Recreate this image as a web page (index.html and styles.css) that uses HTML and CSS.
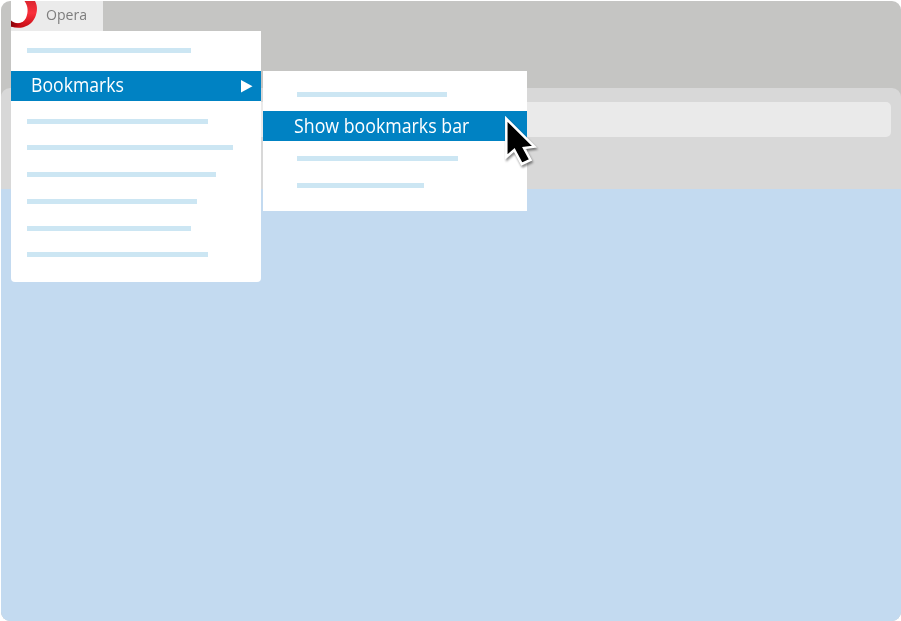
FILE: index.html
```
<!DOCTYPE html>
<html lang="en">
<head>
<meta charset="utf-8">
<title>Opera bookmarks menu</title>
<link rel="stylesheet" href="styles.css">
</head>
<body>
<div class="window">
  <header class="tabs"></header>
  <div class="toolbar"><div class="address"></div></div>
  <main class="page"></main>
</div>
<div class="menu-area">
  <div class="opera-button">
    <svg class="logo" width="28" height="31" viewBox="0 0 28 31">
      <defs>
        <linearGradient id="red" x1="0" y1="0" x2="0" y2="1">
          <stop offset="0" stop-color="#dc2630"/>
          <stop offset=".45" stop-color="#fa303b"/>
          <stop offset="1" stop-color="#c50b14"/>
        </linearGradient>
        <linearGradient id="shade" x1="0" y1="0" x2="1" y2="0">
          <stop offset="0" stop-color="#8a0108"/>
          <stop offset="1" stop-color="#d8101b"/>
        </linearGradient>
      </defs>
      <path d="M0 1H14C18 6 18 12 16 18C13 25 5 26 0 22Z" fill="#fff"/>
      <path d="M13.500 1H24C26.800 6 26.500 12 24 17.500C20 26.500 9 30 0 26.500V21.500C7 24.500 12 23.500 15 18C17.500 12 17.200 6 13.500 1Z" fill="url(#red)"/>
      <path d="M0 20.500C4 24 9 24.300 13 21.500C10 26 5 28 0 26.500Z" fill="url(#shade)"/>
    </svg>
    <span class="opera-label">Opera</span>
  </div>
  <div class="menus">
    <div class="menu main-menu">
      <div class="line w164"></div>
      <div class="item bookmarks"><span class="bookmarks-label">Bookmarks</span>
        <svg class="arrow" width="12" height="13" viewBox="0 0 12 13"><path d="M0 0L11.500 6.300L0 12.600Z" fill="#fff"/></svg>
      </div>
      <div class="lines">
        <div class="line w181"></div>
        <div class="line w206"></div>
        <div class="line w189"></div>
        <div class="line w170"></div>
        <div class="line w164"></div>
        <div class="line w181"></div>
      </div>
    </div>
    <div class="menu submenu">
      <div class="line w150"></div>
      <div class="item show"><span class="show-label">Show bookmarks bar</span></div>
      <div class="lines">
        <div class="line w161"></div>
        <div class="line w127"></div>
      </div>
    </div>
  </div>
</div>
<svg class="cursor" width="44" height="58" viewBox="0 0 44 58">
  <path class="pointer" d="M6.300 7.800V46L14.300 39L21.800 53L30.500 49L24 37L34.300 35.700Z"/>
</svg>
</body>
</html>
```
FILE: styles.css
```
body {
  display: flow-root;
  width: 901px;
  height: 621px;
  margin: 0;
  overflow: hidden;
  background: #fff;
  font-family: "Open Sans", "Noto Sans", sans-serif;
}
.window {
  box-sizing: border-box;
  width: 900px;
  height: 620px;
  margin: 1px 0 0 1px;
  border-radius: 9px;
  overflow: hidden;
  display: flex;
  flex-direction: column;
  background: #c5c5c3;
}
.tabs { height: 87px; }
.toolbar {
  box-sizing: border-box;
  height: 101px;
  padding: 14px 10px 0;
  background: #d8d8d8;
  border-radius: 9px 9px 0 0;
}
.address { height: 34.5px; border-radius: 5px; background: #eaeaea; }
.page { flex: 1; background: #c3daf0; }
.menu-area { position: absolute; left: 11px; top: 0; }
.opera-button {
  display: flex;
  width: 92px;
  height: 31px;
  background: linear-gradient(#fff 1px, #ebebeb 1px);
}
.opera-label {
  margin-left: 7px;
  font-size: 15px;
  line-height: 28px;
  color: #7d7d7d;
  transform: scaleX(.94);
  transform-origin: left;
}
.menus { display: flex; align-items: flex-start; gap: 2px; }
.menu { box-sizing: border-box; background: #fff; }
.main-menu { width: 250px; height: 251px; padding-top: 17px; border-radius: 0 0 4px 4px; }
.submenu { width: 264px; height: 140px; padding-top: 21px; margin-top: 40px; }
.line { height: 5px; margin-left: 16px; background: #cce6f3; }
.submenu .line { margin-left: 34px; }
.item { display: flex; align-items: center; height: 30px; background: #0082c3; color: #fff; }
.bookmarks { margin-top: 18px; }
.show { margin-top: 14px; }
.bookmarks-label, .show-label {
  font-size: 19.5px;
  white-space: nowrap;
  transform: scaleX(.911);
  transform-origin: left;
}
.bookmarks-label { margin-left: 19.5px; line-height: 28px; padding-bottom: 2px; transform: scaleX(.905); }
.show-label { margin-left: 31px; line-height: 30px; }
.arrow { margin: 0 8px 0 auto; }
.lines { display: flex; flex-direction: column; gap: 21.8px; margin-top: 17.5px; }
.submenu .lines { margin-top: 15.4px; }
.w127 { width: 127px; }
.w150 { width: 150px; }
.w161 { width: 161px; }
.w164 { width: 164px; }
.w170 { width: 170px; }
.w181 { width: 181px; }
.w189 { width: 189px; }
.w206 { width: 206px; }
.cursor { position: absolute; left: 500px; top: 111px; filter: drop-shadow(1px 2px 1px #0007); }
.pointer { fill: #000; stroke: #fff; stroke-width: 2.5px; }
```
